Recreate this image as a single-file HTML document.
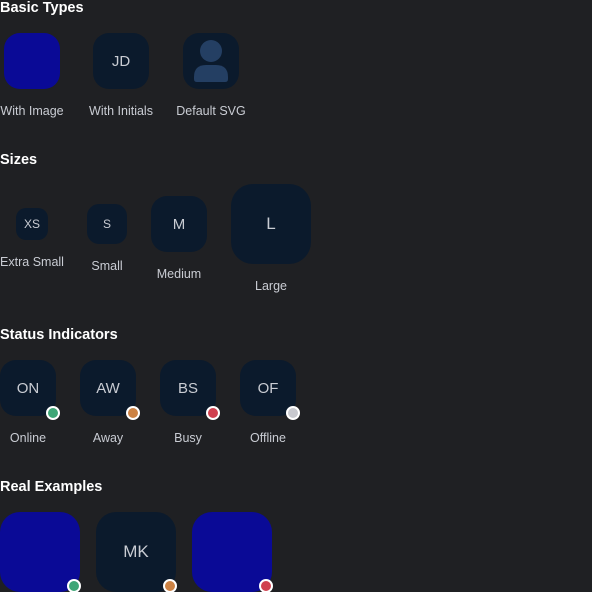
<!DOCTYPE html>
<html><head><meta charset="utf-8"><style>
html,body{margin:0;padding:0;background:#1f2023;width:592px;height:592px;overflow:hidden;position:relative;font-family:"Liberation Sans",sans-serif}
.h{position:absolute;left:0;color:#fff;font-weight:bold;font-size:14.5px;line-height:16px}
.a{position:absolute;background:#0b1a2c;color:#c9ccd3;display:flex;align-items:center;justify-content:center;font-size:15px}
.img{background:#0a0a96}
.l{position:absolute;color:#c9ccd3;font-size:12.5px;line-height:14px;text-align:center;transform:translateX(-50%);white-space:nowrap}
.d{position:absolute;width:10px;height:10px;border:2px solid #fff;border-radius:50%}
</style></head><body>
<div class="h" style="top:0">Basic Types</div>
<div class="a img" style="left:4px;top:33px;width:56px;height:56px;border-radius:16px"></div>
<div class="a" style="left:93px;top:33px;width:56px;height:56px;border-radius:16px">JD</div>
<div class="a" style="left:183px;top:33px;width:56px;height:56px;border-radius:16px"><svg width="56" height="56" viewBox="0 0 56 56"><circle cx="28" cy="18" r="11" fill="#243f63"/><path d="M11 44 Q11 32 23 32 H33 Q45 32 45 44 V46 Q45 49 42 49 H14 Q11 49 11 46 Z" fill="#243f63"/></svg></div>
<div class="l" style="left:32px;top:104px">With Image</div>
<div class="l" style="left:121px;top:104px">With Initials</div>
<div class="l" style="left:211px;top:104px">Default SVG</div>

<div class="h" style="top:152px">Sizes</div>
<div class="a" style="left:16px;top:208px;width:32px;height:32px;border-radius:10px;font-size:12px">XS</div>
<div class="a" style="left:87px;top:204px;width:40px;height:40px;border-radius:12px;font-size:12px">S</div>
<div class="a" style="left:151px;top:196px;width:56px;height:56px;border-radius:16px">M</div>
<div class="a" style="left:231px;top:184px;width:80px;height:80px;border-radius:22px;font-size:17px">L</div>
<div class="l" style="left:32px;top:255px">Extra Small</div>
<div class="l" style="left:107px;top:259px">Small</div>
<div class="l" style="left:179px;top:267px">Medium</div>
<div class="l" style="left:271px;top:279px">Large</div>

<div class="h" style="top:327px">Status Indicators</div>
<div class="a" style="left:0;top:360px;width:56px;height:56px;border-radius:16px">ON</div>
<div class="a" style="left:80px;top:360px;width:56px;height:56px;border-radius:16px">AW</div>
<div class="a" style="left:160px;top:360px;width:56px;height:56px;border-radius:16px">BS</div>
<div class="a" style="left:240px;top:360px;width:56px;height:56px;border-radius:16px">OF</div>
<div class="d" style="left:46px;top:406px;background:#3ea676"></div>
<div class="d" style="left:126px;top:406px;background:#cc8244"></div>
<div class="d" style="left:206px;top:406px;background:#d0404f"></div>
<div class="d" style="left:286px;top:406px;background:#c8c9cf"></div>
<div class="l" style="left:28px;top:431px">Online</div>
<div class="l" style="left:108px;top:431px">Away</div>
<div class="l" style="left:188px;top:431px">Busy</div>
<div class="l" style="left:268px;top:431px">Offline</div>

<div class="h" style="top:479px">Real Examples</div>
<div class="a img" style="left:0;top:512px;width:80px;height:80px;border-radius:20px"></div>
<div class="a" style="left:96px;top:512px;width:80px;height:80px;border-radius:20px;font-size:17px">MK</div>
<div class="a img" style="left:192px;top:512px;width:80px;height:80px;border-radius:20px"></div>
<div class="d" style="left:67px;top:579px;background:#3ea676"></div>
<div class="d" style="left:163px;top:579px;background:#cc8244"></div>
<div class="d" style="left:259px;top:579px;background:#d0404f"></div>
</body></html>
